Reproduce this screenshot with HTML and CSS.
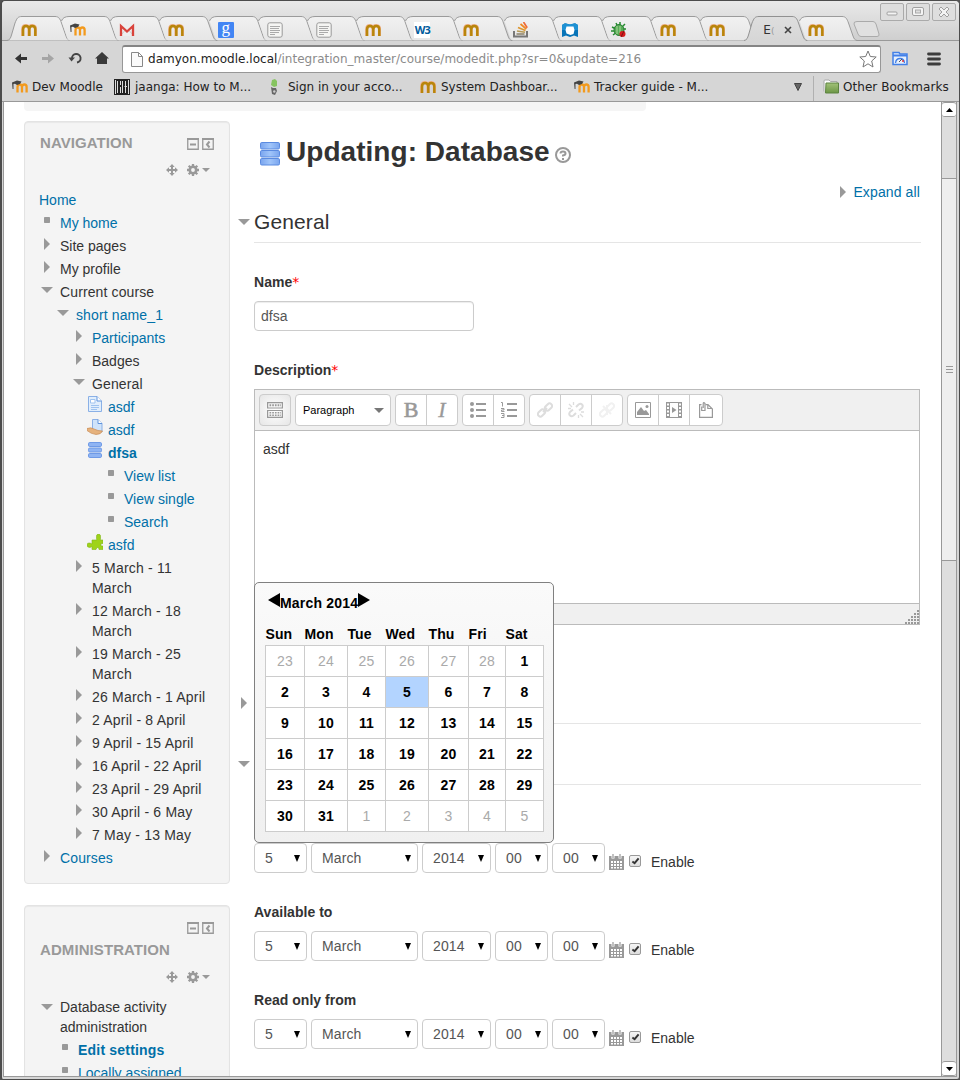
FILE: index.html
```
<!DOCTYPE html>
<html lang="en">
<head>
<meta charset="utf-8">
<title>Editing Database</title>
<link rel="stylesheet" href="styles.css">
</head>
<body>
<svg class="sprite" aria-hidden="true">
  <defs>
    <linearGradient id="tabfill" x1="0" y1="0" x2="0" y2="1"><stop offset="0" stop-color="#f1f1f1"/><stop offset="1" stop-color="#e6e6e6"/></linearGradient>
    <linearGradient id="actfill" x1="0" y1="0" x2="0" y2="1"><stop offset="0" stop-color="#dedede"/><stop offset="1" stop-color="#d6d6d6"/></linearGradient>
    <linearGradient id="dbfill" x1="0" y1="0" x2="1" y2="0"><stop offset="0" stop-color="#7aa5ee"/><stop offset=".5" stop-color="#a0c5fa"/><stop offset="1" stop-color="#7aa5ee"/></linearGradient>
    <linearGradient id="folder" x1="0" y1="0" x2="0" y2="1"><stop offset="0" stop-color="#a3c279"/><stop offset="1" stop-color="#6c9645"/></linearGradient>
  </defs>
  <symbol id="tab-first" viewBox="0 0 64 25"><path d="M0 24.500C3 24 3.500 22 4.500 19L8 7C10 2 11 .5 15 .5H48C52 .5 53 3 54.500 7L59 20C60 23 61 24 63 24.500" fill="url(#tabfill)" stroke="#9b9b9b"/></symbol>
  <symbol id="tab-next" viewBox="0 0 64 25"><path d="M10.500 20L5.500 5C6.500 2 9 .5 13 .5H48C52 .5 53 3 54.500 7L59 20C60 23 61 24 63 24.500H14C12 24 11.500 23 10.500 20Z" fill="url(#tabfill)"/><path d="M5.500 5C6.500 2 9 .5 13 .5H48C52 .5 53 3 54.500 7L59 20C60 23 61 24 63 24.500" fill="none" stroke="#9b9b9b"/></symbol>
  <symbol id="tab-active" viewBox="0 0 64 25"><path d="M0 24.500C3 24 3.500 22 4.500 19L8 7C10 2 11 .5 15 .5H48C52 .5 53 3 54.500 7L59 20C60 23 61 24 63 24.500V25H0Z" fill="url(#actfill)"/><path d="M0 24.500C3 24 3.500 22 4.500 19L8 7C10 2 11 .5 15 .5H48C52 .5 53 3 54.500 7L59 20C60 23 61 24 63 24.500" fill="none" stroke="#919191"/></symbol>
  <symbol id="m" viewBox="0 0 16 16"><path d="M1.700 14V7.500Q1.700 3.700 5 3.700T8 7.500V14M8 7.500Q8 3.700 11.300 3.700T14.500 7.500V14" fill="none" stroke="#f0b08c" stroke-width="3.200"/><path d="M2 14V7.500Q2 4 5 4T8.300 7.500V14M8.300 7.500Q8.300 4 11.300 4T14.300 7.500V14" fill="none" stroke="#b8860b" stroke-width="2.500"/></symbol>
  <symbol id="capm" viewBox="0 0 16 16"><path d="M5.500 13.500V8Q5.700 5.500 7.800 5.500T10 8V13.500M10 8Q10.200 5.500 12.400 5.500T14.600 8V13.500" fill="none" stroke="#f39a1d" stroke-width="2.300"/><path d="M0 3.500L5 1.500L9.500 2.500L8 5L5 6L3 4.800L1.500 5V10H.6Z" fill="#444"/></symbol>
  <symbol id="gmail" viewBox="0 0 16 16"><path d="M1 3H15V14H1Z" fill="#eee"/><path d="M1 14L6 8.500M15 14L10 8.500" stroke="#ccc"/><path d="M2 14V4L8 9.500L14 4V14" fill="none" stroke="#d9433b" stroke-width="2.300"/></symbol>
  <symbol id="doc" viewBox="0 0 16 16"><rect x=".8" y=".8" width="14.400" height="14.400" rx="2" fill="#f5f5f3" stroke="#999"/><path d="M3 4.500H13M3 6.500H12M3 8.500H13M3 10.500H12M3 12.500H8" stroke="#aaa"/></symbol>
  <symbol id="stack" viewBox="0 0 16 16"><path d="M1 9V14.500H14V9" fill="none" stroke="#777" stroke-width="2"/><path d="M3.500 12H11.500" stroke="#8b8068" stroke-width="1.500"/><path d="M4 9L12 10.300" stroke="#b79a55" stroke-width="1.600"/><path d="M5 5.500L12.500 8.500" stroke="#dc962e" stroke-width="1.700"/><path d="M7.500 2L13.300 7" stroke="#f08a22" stroke-width="1.700"/><path d="M10.500 0L14.200 5.800" stroke="#ee6a37" stroke-width="1.700"/></symbol>
  <symbol id="blue" viewBox="0 0 16 16"><path d="M0 3L3 1.200L8 2.500L13 1.200L16 3V15L12 13.500L8 15L4 13.500L0 15Z" fill="#0874b8"/><path d="M0 3L3 1.200L8 2.500L13 1.200L16 3V8H0Z" fill="#1e91d3"/><path d="M4.500 4.500H11.500L12.500 8L11.500 12L8.500 13L4.500 11.500L3.500 8Z" fill="#fff"/></symbol>
  <symbol id="bug" viewBox="0 0 16 16"><path d="M1 5L5 7M0 9H5M5 1L7 5M9 0V5M14 2L10 6M15 7H10M2 13L6 10" stroke="#268c31" stroke-width="1.500"/><ellipse cx="8" cy="8" rx="5" ry="5.500" fill="#55ae55" stroke="#2b7f35"/><path d="M6 4V12M9 4V11" stroke="#b2d4a0"/><circle cx="11.500" cy="12" r="3" fill="#d51c1c"/><path d="M10 15L13 9" stroke="#7b1111"/></symbol>
  <symbol id="qr" viewBox="0 0 16 16"><path d="M0 0H16V16H0Z" fill="#222"/><path d="M1.500 1V15M3.500 2V14M6.500 2V6M6.500 8V14M8.500 2V14M11.500 2V14M14.500 1V15" stroke="#ddd"/><path d="M10.500 7.500H13" stroke="#ddd"/></symbol>
  <symbol id="leaf" viewBox="0 0 8 16"><path d="M2 1L5 0L7 2V7L4 8L1 6Z" fill="#86c460"/><path d="M1 8L3 9L6 9L7 12L5 16L2 15Z" fill="#666"/><circle cx="4.300" cy="12.500" r="1.200" fill="#ccc"/></symbol>
  <symbol id="minus" viewBox="0 0 12 12"><path d="M.75 1H11.250V11.250H.75Z" fill="none" stroke="#999" stroke-width="1.300"/><path d="M0 1H12" stroke="#999" stroke-width="2"/><path d="M3 6.500H9" stroke="#999" stroke-width="2"/></symbol>
  <symbol id="dock" viewBox="0 0 12 12"><path d="M.75 1H11.250V11.250H.75Z" fill="none" stroke="#999" stroke-width="1.300"/><path d="M0 1H12" stroke="#999" stroke-width="2"/><path d="M7.500 3.500L5 6.500L7.500 9.500" fill="none" stroke="#999" stroke-width="2"/></symbol>
  <symbol id="move" viewBox="0 0 12 12"><path d="M6 2V10M2 6H10" stroke="#999" stroke-width="2"/><path d="M6 0L8.700 3H3.300ZM6 12L8.700 9H3.300ZM0 6L3 3.300V8.700ZM12 6L9 3.300V8.700Z" fill="#999"/></symbol>
  <symbol id="gear" viewBox="0 0 12 12"><circle cx="6" cy="6" r="3.200" fill="none" stroke="#999" stroke-width="2.600"/><path d="M6 0V2.500M6 9.500V12M0 6H2.500M9.500 6H12M1.700 1.700L3.500 3.500M8.500 8.500L10.300 10.300M10.300 1.700L8.500 3.500M3.500 8.500L1.700 10.300" stroke="#999" stroke-width="2.300"/></symbol>
  <symbol id="right" viewBox="0 0 16 16"><path d="M5 2L11 8L5 14Z" fill="#999"/></symbol>
  <symbol id="down" viewBox="0 0 16 16"><path d="M2 5H14L8 11Z" fill="#999"/></symbol>
  <symbol id="dot" viewBox="0 0 16 16"><rect x="5" y="5" width="6" height="6" rx=".7" fill="#999"/></symbol>
  <symbol id="page" viewBox="0 0 16 16"><path d="M1.500 .5H10L14.500 5V15.500H1.500Z" fill="#e1eefc" stroke="#8ab0e6"/><path d="M10 .5V5H14.500" fill="#fff" stroke="#5f93dc"/><path d="M4 9.500H12M4 11.500H12M4 13.500H10" stroke="#9fc3ef"/><path d="M3.500 3.500H8V7H3.500Z" fill="#fff" stroke="#9fc3ef"/></symbol>
  <symbol id="hand" viewBox="0 0 16 16"><path d="M5.500 .5H11L15 4.500V13H5.500Z" fill="#cfe3fa" stroke="#8ab0e6"/><path d="M11 .5V4.500H15" fill="#fff" stroke="#5f93dc"/><path d="M0 9.500Q4 8 7 10L11 11.500L15.500 12Q14 15.500 9 15.500Q4 15 0 11.500Z" fill="#e6b27d" stroke="#c98d58" stroke-width=".7"/></symbol>
  <symbol id="db" viewBox="0 0 20 24"><g fill="url(#dbfill)" stroke="#5b8be0"><rect x=".5" y=".5" width="19" height="6.500" rx="1.300"/><rect x=".5" y="8.500" width="19" height="6.500" rx="1.300"/><rect x=".5" y="16.500" width="19" height="6.500" rx="1.300"/></g></symbol>
  <symbol id="dbsmall" viewBox="0 0 16 16"><g fill="#8fb4f3" stroke="#6f9ae6"><rect x="1.500" y=".5" width="13" height="4" rx="1.300"/><rect x="1.500" y="6" width="13" height="4" rx="1.300"/><rect x="1.500" y="11.500" width="13" height="4" rx="1.300"/></g></symbol>
  <symbol id="puzzle" viewBox="0 0 16 16"><path d="M5 15.500V12.500L3 13.500Q0 13.500 0 11T3 9L5 10V6H9.800L9.500 4Q9 0 11.500 0T13.500 4L13.300 6H16V9.500H14V12H16V15.500H12L11.500 13.500H10L9 15.500Z" fill="#9fd319" stroke="#82b51b" stroke-width=".6"/></symbol>
  <symbol id="cal" viewBox="0 0 15 16"><path d="M0 2H15V16H0Z" fill="#999"/><path d="M2 7H4V9H2ZM5 7H7V9H5ZM8 7H10V9H8ZM11 7H13V9H11ZM2 10H4V12H2ZM5 10H7V12H5ZM8 10H10V12H8ZM11 10H13V12H11ZM2 13H4V14.500H2ZM5 13H7V14.500H5ZM8 13H10V14.500H8ZM11 13H13V14.500H11Z" fill="#fff"/><path d="M4 0V4.500M11 0V4.500" stroke="#fff" stroke-width="3"/><path d="M4 0V4M11 0V4" stroke="#999" stroke-width="1.200"/></symbol>
  <symbol id="link" viewBox="0 0 16 16"><g fill="none" stroke-width="2"><rect x="7.500" y="2.500" width="8" height="5" rx="2.500" transform="rotate(-45 11.500 5)"/><rect x=".5" y="8.500" width="8" height="5" rx="2.500" transform="rotate(-45 4.500 11)"/><path d="M6 10L10 6"/></g></symbol>
  <symbol id="unlink" viewBox="0 0 16 16"><g fill="none" stroke-width="2"><path d="M8 5L10.500 2.500Q12.500 1 14 2.500T14 6L11 8.500M8 11L5.500 13.500Q3.500 15 2 13.500T2 10L5 7.500"/><path d="M1 2L4 5M5.500 0V3M0 6.500H3M12 12L15 15M10.500 13V16M13 10H16" stroke-width="1.300"/></g></symbol>
  <symbol id="nolink" viewBox="0 0 16 16"><g fill="none" stroke-width="2"><rect x="7.500" y="2.500" width="8" height="5" rx="2.500" transform="rotate(-45 11.500 5)"/><rect x=".5" y="8.500" width="8" height="5" rx="2.500" transform="rotate(-45 4.500 11)"/><path d="M4 4L12 12M8 3V13"/></g></symbol>
</svg>

<div class="window">
  <header class="titlebar">
    <div class="tabs">
      <div class="tab"><svg class="shape"><use href="#tab-first"/></svg><svg class="fav"><use href="#m"/></svg></div>
      <div class="tab"><svg class="shape"><use href="#tab-next"/></svg><svg class="fav"><use href="#capm"/></svg></div>
      <div class="tab"><svg class="shape"><use href="#tab-next"/></svg><svg class="fav"><use href="#gmail"/></svg></div>
      <div class="tab"><svg class="shape"><use href="#tab-next"/></svg><svg class="fav"><use href="#m"/></svg></div>
      <div class="tab"><svg class="shape"><use href="#tab-next"/></svg><span class="fav fav-g">g</span></div>
      <div class="tab"><svg class="shape"><use href="#tab-next"/></svg><svg class="fav"><use href="#doc"/></svg></div>
      <div class="tab"><svg class="shape"><use href="#tab-next"/></svg><svg class="fav"><use href="#doc"/></svg></div>
      <div class="tab"><svg class="shape"><use href="#tab-next"/></svg><svg class="fav"><use href="#m"/></svg></div>
      <div class="tab"><svg class="shape"><use href="#tab-next"/></svg><span class="fav fav-w">W3</span></div>
      <div class="tab"><svg class="shape"><use href="#tab-next"/></svg><svg class="fav"><use href="#m"/></svg></div>
      <div class="tab"><svg class="shape"><use href="#tab-next"/></svg><svg class="fav"><use href="#stack"/></svg></div>
      <div class="tab"><svg class="shape"><use href="#tab-next"/></svg><svg class="fav"><use href="#blue"/></svg></div>
      <div class="tab"><svg class="shape"><use href="#tab-next"/></svg><svg class="fav"><use href="#bug"/></svg></div>
      <div class="tab"><svg class="shape"><use href="#tab-next"/></svg><svg class="fav"><use href="#m"/></svg></div>
      <div class="tab"><svg class="shape"><use href="#tab-next"/></svg><svg class="fav"><use href="#m"/></svg></div>
      <div class="tab active"><svg class="shape"><use href="#tab-active"/></svg><span class="tab-title">E<span class="faded">(</span></span><svg class="tab-close" viewBox="0 0 8 8"><path d="M1 1L7 7M7 1L1 7" stroke="#444" stroke-width="1.600"/></svg></div>
      <div class="tab"><svg class="shape"><use href="#tab-next"/></svg><svg class="fav"><use href="#m"/></svg></div>
    </div>
    <svg class="newtab" viewBox="0 0 27 17"><path d="M4 .5H20Q22 .5 23 3L26 13Q26.500 15.500 24 15.500H8Q6 15.500 5 13L1 3Q.5 .5 4 .5Z" fill="#e0e0e0" stroke="#aaa"/></svg>
    <div class="winbtns">
      <svg viewBox="0 0 24 18"><rect x=".5" y=".5" width="23" height="17" rx="1.500"/><rect class="glyph" x="7" y="9" width="10" height="3" rx="1"/></svg>
      <svg viewBox="0 0 24 18"><rect x=".5" y=".5" width="23" height="17" rx="1.500"/><rect class="glyph" x="6.500" y="4.500" width="11" height="8" rx="1.500"/><rect x="9.500" y="7" width="5" height="3"/></svg>
      <svg viewBox="0 0 24 18"><rect x=".5" y=".5" width="23" height="17" rx="1.500"/><path class="glyph" d="M7 6L9 4L12 7L15 4L17 6L14 9L17 12L15 14L12 11L9 14L7 12L10 9Z"/></svg>
    </div>
  </header>

  <div class="toolbar">
    <svg class="tool" viewBox="0 0 14 14"><path d="M1 6.500L7 1.500V5H13V8H7V11.500Z" fill="#333"/></svg>
    <svg class="tool" viewBox="0 0 14 14"><path d="M13 6.500L7 1.500V5H1V8H7V11.500Z" fill="#a5a5a5"/></svg>
    <svg class="tool" viewBox="0 0 14 14"><path d="M4 6.500A4.300 4.300 0 1 1 9 10.500" fill="none" stroke="#444" stroke-width="1.900"/><path d="M.5 5.500H7L3.500 9.500Z" fill="#444"/></svg>
    <svg class="tool" viewBox="0 0 14 14"><path d="M7 0L14 6.500H12V12H2V6.500H0Z" fill="#3a3a3a"/></svg>
    <div class="omnibox">
      <svg class="pageicon" viewBox="0 0 12 15"><path d="M.5 .5H7.500L11.500 4.500V14.500H.5ZM7.500 .5V4.500H11.500" fill="#fafafa" stroke="#888"/></svg>
      <span class="url"><span class="host">damyon.moodle.local</span>/integration_master/course/modedit.php?sr=0&amp;update=216</span>
      <svg class="star" viewBox="0 0 18 18"><path d="M9 1L11.300 6.500L17.200 7L12.700 11L14 17L9 13.800L4 17L5.300 11L.8 7L6.700 6.500Z" fill="#fff" stroke="#777"/></svg>
    </div>
    <svg class="ext" viewBox="0 0 16 15"><path d="M1 1.500H7L8 3H15V13.500H1Z" fill="#e7f0fc" stroke="#4280e8" stroke-width="1.500"/><path d="M1 4.500H15" stroke="#4280e8" stroke-width="2"/><path d="M3.500 12Q4 7.500 8 7.500T12.500 12" fill="none" stroke="#4280e8" stroke-width="1.300"/><path d="M7 11L10 8" stroke="#555"/><circle cx="11" cy="10" r="1" fill="#e33"/></svg>
    <svg class="menu" viewBox="0 0 14 14"><path d="M1.500 2H12.500M1.500 7H12.500M1.500 12H12.500" stroke="#3c3c3c" stroke-width="2.800" stroke-linecap="round"/></svg>
  </div>

  <div class="bookmarks">
    <div class="bm bm1"><svg><use href="#capm"/></svg><span>Dev Moodle</span></div>
    <div class="bm bm2"><svg><use href="#qr"/></svg><span>jaanga: How to M...</span></div>
    <div class="bm bm3"><svg><use href="#leaf"/></svg><span>Sign in your acco...</span></div>
    <div class="bm bm4"><svg><use href="#m"/></svg><span>System Dashboar...</span></div>
    <div class="bm bm5"><svg><use href="#capm"/></svg><span>Tracker guide - M...</span></div>
    <svg class="more" viewBox="0 0 8 8"><path d="M.5 .5H7.500L4 7.500Z" fill="#666" stroke="#444"/></svg>
    <div class="bm other"><svg viewBox="0 0 16 15"><path d="M1 12V1.500Q1 .5 2 .5H6L7.500 2H14V5" fill="#fff" stroke="#aaa"/><path d="M3 3.500H15.500V13.500H2.500Z" fill="url(#folder)" stroke="#5c8440"/></svg><span>Other Bookmarks</span></div>
  </div>

  <div class="viewport">
    <div class="page">
      <div class="crumb"></div>
      <aside class="sidebar">
        <section class="block">
          <div class="block-head"><h2>NAVIGATION</h2><svg><use href="#minus"/></svg><svg><use href="#dock"/></svg></div>
          <div class="block-tools"><svg class="mv"><use href="#move"/></svg><svg><use href="#gear"/></svg><i class="caret"></i></div>
          <ul class="tree">
            <li class="root"><a>Home</a></li>
            <li class="l1"><svg><use href="#dot"/></svg><a>My home</a></li>
            <li class="l1"><svg class="tri"><use href="#right"/></svg><span>Site pages</span></li>
            <li class="l1"><svg class="tri"><use href="#right"/></svg><span>My profile</span></li>
            <li class="l1"><svg class="tri"><use href="#down"/></svg><span class="wide">Current course</span></li>
            <li class="l2"><svg class="tri"><use href="#down"/></svg><a class="wide">short name_1</a></li>
            <li class="l3"><svg class="tri"><use href="#right"/></svg><a>Participants</a></li>
            <li class="l3"><svg class="tri"><use href="#right"/></svg><span>Badges</span></li>
            <li class="l3"><svg class="tri"><use href="#down"/></svg><span class="wide">General</span></li>
            <li class="l4"><svg><use href="#page"/></svg><a>asdf</a></li>
            <li class="l4"><svg><use href="#hand"/></svg><a>asdf</a></li>
            <li class="l4"><svg><use href="#dbsmall"/></svg><a class="bold">dfsa</a></li>
            <li class="l5"><svg><use href="#dot"/></svg><a>View list</a></li>
            <li class="l5"><svg><use href="#dot"/></svg><a>View single</a></li>
            <li class="l5"><svg><use href="#dot"/></svg><a>Search</a></li>
            <li class="l4"><svg><use href="#puzzle"/></svg><a>asfd</a></li>
            <li class="l3"><svg class="tri"><use href="#right"/></svg><span class="week">5 March - 11<br>March</span></li>
            <li class="l3"><svg class="tri"><use href="#right"/></svg><span class="week">12 March - 18<br>March</span></li>
            <li class="l3"><svg class="tri"><use href="#right"/></svg><span class="week">19 March - 25<br>March</span></li>
            <li class="l3"><svg class="tri"><use href="#right"/></svg><span class="week">26 March - 1 April</span></li>
            <li class="l3"><svg class="tri"><use href="#right"/></svg><span class="week">2 April - 8 April</span></li>
            <li class="l3"><svg class="tri"><use href="#right"/></svg><span class="week">9 April - 15 April</span></li>
            <li class="l3"><svg class="tri"><use href="#right"/></svg><span class="week">16 April - 22 April</span></li>
            <li class="l3"><svg class="tri"><use href="#right"/></svg><span class="week">23 April - 29 April</span></li>
            <li class="l3"><svg class="tri"><use href="#right"/></svg><span class="week">30 April - 6 May</span></li>
            <li class="l3"><svg class="tri"><use href="#right"/></svg><span class="week">7 May - 13 May</span></li>
            <li class="l1"><svg class="tri"><use href="#right"/></svg><a class="wide">Courses</a></li>
          </ul>
        </section>
        <section class="block">
          <div class="block-head only-icons"><svg><use href="#minus"/></svg><svg><use href="#dock"/></svg></div>
          <h2 class="admin-title">ADMINISTRATION</h2>
          <div class="block-tools admin-tools"><svg class="mv"><use href="#move"/></svg><svg><use href="#gear"/></svg><i class="caret"></i></div>
          <ul class="tree">
            <li class="l1"><svg class="low"><use href="#down"/></svg><span>Database activity<br>administration</span></li>
            <li class="l2 admin"><svg><use href="#dot"/></svg><a class="bold week">Edit settings</a></li>
            <li class="l2 admin"><svg><use href="#dot"/></svg><a>Locally assigned</a></li>
          </ul>
        </section>
      </aside>

      <main class="main">
        <h1><svg class="dbicon"><use href="#db"/></svg><span>Updating: Database</span><svg class="help" viewBox="0 0 16 16"><circle cx="8" cy="8" r="7" fill="none" stroke="#999" stroke-width="2"/><path d="M5.500 6.500Q5.500 4.500 8 4.500T10.500 6.500Q10.500 8 8 8.500V9.500M8 11V13" fill="none" stroke="#999" stroke-width="2"/></svg></h1>
        <div class="expand"><svg><use href="#right"/></svg><a class="wide">Expand all</a></div>
        <div class="legend"><svg><use href="#down"/></svg>General</div>
        <label class="field-label name-label">Name<span class="req">*</span></label>
        <div class="input">dfsa</div>
        <label class="field-label desc-label">Description<span class="req">*</span></label>
        <div class="editor">
          <div class="editor-bar">
            <div class="group toggle"><b><svg viewBox="0 0 16 16"><path d="M.6 .6H15.400V6H.6ZM.6 8.500H15.400V15.400H.6Z" fill="none" stroke="#999" stroke-width="1.200"/><path d="M2.500 3.300H14" stroke="#999" stroke-width="2" stroke-dasharray="1.700 1"/><path d="M2.500 10.700H14M2.500 13.300H14" stroke="#999" stroke-width="1.500" stroke-dasharray="1.700 1"/></svg></b></div>
            <div class="group para">Paragraph<i class="caret"></i></div>
            <div class="group"><b class="bi">B</b><b class="bi it">I</b></div>
            <div class="group"><b><svg viewBox="0 0 16 16"><path d="M6 2H16M6 8H16M6 14H16" stroke="#999" stroke-width="2"/><circle cx="2" cy="2" r="2" fill="#999"/><circle cx="2" cy="8" r="2" fill="#999"/><circle cx="2" cy="14" r="2" fill="#999"/></svg></b><b><svg viewBox="0 0 16 16"><path d="M6 2H16M6 8H16M6 14H16" stroke="#999" stroke-width="2"/><path d="M0 .5H1.500V4.500M0 6.500H3V8H.5V9.500H3.500M0 11.500H3V15.500H0M1 13.500H3" fill="none" stroke="#999"/></svg></b></div>
            <div class="group"><b><svg stroke="#ddd"><use href="#link"/></svg></b><b><svg stroke="#ddd"><use href="#unlink"/></svg></b><b><svg stroke="#f1f1f1"><use href="#nolink"/></svg></b></div>
            <div class="group media"><b><svg viewBox="0 0 16 16"><path d="M.5 .5H15.500V15.500H.5Z" fill="none" stroke="#999"/><path d="M2 13V10L6 5L9 9L11 8L14 12V13Z" fill="#999"/><circle cx="12" cy="4.500" r="1.500" fill="#999"/></svg></b><b><svg viewBox="0 0 16 16"><path d="M0 0H4V16H0ZM12 0H16V16H12Z" fill="#999"/><path d="M4 .5H12M4 15.500H12" stroke="#999"/><path d="M2 1.500V15M14 1.500V15" stroke="#fff" stroke-width="2" stroke-dasharray="2 1.500"/><path d="M6 5L10.500 8L6 11Z" fill="#999"/></svg></b><b><svg viewBox="0 0 16 16"><path d="M3.500 2.600H1.600V15.400H14.400V7L10 2.600H7.500M9.800 2.600V6.500H14.400" fill="none" stroke="#999" stroke-width="1.200"/><path d="M3.700 4.500V8.500H7V1.500Q5.300 -.5 5.200 2V6" fill="none" stroke="#999" stroke-width="1.200"/></svg></b></div>
          </div>
          <div class="editor-body">asdf</div>
          <div class="editor-status"><svg viewBox="0 0 14 14"><path d="M0 13H14M3 10H14M6 7H14M9 4H14M12 1H14" stroke="#999" stroke-width="2" stroke-dasharray="2 1"/></svg></div>
        </div>
        <div class="fieldset collapsed"><svg><use href="#right"/></svg></div>
        <div class="fieldset"><svg><use href="#down"/></svg></div>
        <div class="date first">
          <div class="select s">5</div><div class="select m">March</div><div class="select y">2014</div><div class="select s">00</div><div class="select s">00</div><svg class="calicon"><use href="#cal"/></svg><i class="check"><svg viewBox="0 0 9 9"><path d="M1 5L3.500 7L8 1.500" fill="none" stroke="#333" stroke-width="2.200"/></svg></i><span class="enable">Enable</span>
        </div>
        <label class="field-label date-label">Available to</label>
        <div class="date">
          <div class="select s">5</div><div class="select m">March</div><div class="select y">2014</div><div class="select s">00</div><div class="select s">00</div><svg class="calicon"><use href="#cal"/></svg><i class="check"><svg viewBox="0 0 9 9"><path d="M1 5L3.500 7L8 1.500" fill="none" stroke="#333" stroke-width="2.200"/></svg></i><span class="enable">Enable</span>
        </div>
        <label class="field-label date-label">Read only from</label>
        <div class="date">
          <div class="select s">5</div><div class="select m">March</div><div class="select y">2014</div><div class="select s">00</div><div class="select s">00</div><svg class="calicon"><use href="#cal"/></svg><i class="check"><svg viewBox="0 0 9 9"><path d="M1 5L3.500 7L8 1.500" fill="none" stroke="#333" stroke-width="2.200"/></svg></i><span class="enable">Enable</span>
        </div>

        <div class="calendar">
          <div class="cal-head"><svg viewBox="0 0 12 14"><path d="M12 0V14L0 7Z"/></svg><span class="week">March 2014</span><svg viewBox="0 0 12 14"><path d="M0 0V14L12 7Z"/></svg></div>
          <table>
            <colgroup><col class="c39"><col class="c43"><col class="c38"><col class="c43"><col class="c40"><col class="c37"><col class="c38"></colgroup>
            <thead><tr><th>Sun</th><th>Mon</th><th>Tue</th><th>Wed</th><th>Thu</th><th>Fri</th><th>Sat</th></tr></thead>
            <tbody>
              <tr><td class="off">23</td><td class="off">24</td><td class="off">25</td><td class="off">26</td><td class="off">27</td><td class="off">28</td><td>1</td></tr>
              <tr><td>2</td><td>3</td><td>4</td><td class="sel">5</td><td>6</td><td>7</td><td>8</td></tr>
              <tr><td>9</td><td>10</td><td>11</td><td>12</td><td>13</td><td>14</td><td>15</td></tr>
              <tr><td>16</td><td>17</td><td>18</td><td>19</td><td>20</td><td>21</td><td>22</td></tr>
              <tr><td>23</td><td>24</td><td>25</td><td>26</td><td>27</td><td>28</td><td>29</td></tr>
              <tr><td>30</td><td>31</td><td class="off">1</td><td class="off">2</td><td class="off">3</td><td class="off">4</td><td class="off">5</td></tr>
            </tbody>
          </table>
        </div>
      </main>
    </div>
    <div class="scrollbar">
      <div class="sb-btn"><svg viewBox="0 0 7 4"><path d="M0 4L3.500 0L7 4Z"/></svg></div>
      <div class="sb-gap"></div>
      <div class="sb-thumb"><i></i><i></i><i></i></div>
      <div class="sb-rest"></div>
      <div class="sb-btn"><svg viewBox="0 0 7 4"><path d="M0 0L3.500 4L7 0Z"/></svg></div>
    </div>
  </div>
</div>
</body>
</html>
```
FILE: styles.css
```
* { box-sizing: border-box; }
html, body { margin: 0; height: 1080px; overflow: hidden; }
body { font: 14px/20px "Liberation Sans", Arial, sans-serif; color: #333; background: #555; }
svg { display: block; flex: none; }
.sprite { position: absolute; width: 0; height: 0; }
h1, h2, ul { margin: 0; padding: 0; }
a { color: #0070a8; }
.bold { font-weight: bold; }
.wide { letter-spacing: .12px; }
.week { letter-spacing: .2px; }

.window { height: 1080px; display: flex; flex-direction: column; background: #d6d6d6; border: 1px solid #4c4c4c; border-left-width: 2px; border-radius: 5px 5px 3px 3px; }

/* browser frame */
.titlebar { height: 40px; flex: none; display: flex; align-items: flex-end; padding-left: 5px; background: linear-gradient(#e9e9e9, #cfcfcf); border-bottom: 1px solid #999; border-radius: 4px 4px 0 0; }
.tabs { display: flex; align-items: flex-end; margin-bottom: -1px; }
.tab { position: relative; flex: none; display: flex; width: 64px; height: 25px; margin-right: -14.850px; padding: 6px 0 0 14px; }
.shape { position: absolute; inset: 0; width: 64px; height: 25px; }
.fav { position: relative; width: 16px; height: 16px; }
.fav-g { background: #4285f4; color: #fff; border-radius: 1px; font: 17px/12px "Liberation Serif", serif; text-align: center; }
.fav-w { background: #fff; color: #005a9c; font: bold 11px/16px "Open Sans", sans-serif; letter-spacing: -1px; text-align: center; }
.active { z-index: 1; padding: 5px 0 0 19px; }
.tab-title { position: relative; width: 12px; white-space: nowrap; font: 12px/18px "DejaVu Sans", sans-serif; color: #333; }
.faded { color: #999; font-size: 9px; }
.tab-close { position: relative; width: 8px; height: 8px; margin: 5px 0 0 9px; }
.newtab { width: 27px; height: 17px; margin: 0 0 2px 10px; }
.winbtns { display: flex; gap: 2px; margin-left: auto; align-self: flex-start; padding: 2px 3px 0 0; }
.winbtns svg { width: 24px; height: 18px; fill: #dedede; stroke: #aaa; }
.winbtns .glyph { fill: #f4f4f4; stroke: #a0a0a0; }

.toolbar { height: 35px; flex: none; display: flex; align-items: center; padding-left: 12px; }
.tool { width: 14px; height: 14px; margin-right: 13px; }
.omnibox { width: 759px; height: 28px; display: flex; align-items: center; padding: 0 3px 0 8px; background: #fff; border: 1px solid #979797; border-top: 2px solid #858585; border-radius: 3px; font: 12px/20px "DejaVu Sans", sans-serif; color: #8b8b8b; }
.pageicon { width: 12px; height: 15px; margin-right: 5px; }
.host { color: #222; }
.url { white-space: nowrap; letter-spacing: .02px; }
.star { width: 18px; height: 18px; margin-left: auto; }
.ext { width: 16px; height: 15px; margin-left: 11px; }
.menu { width: 14px; height: 14px; margin-left: 19px; }

.bookmarks { height: 26px; flex: none; display: flex; padding-left: 10px; border-bottom: 1px solid #999; font: 12px/22px "DejaVu Sans", sans-serif; color: #222; white-space: nowrap; }
.bm { display: flex; }
.bm svg { width: 16px; height: 16px; margin: 3px 4px 0 0; }
.bm1 { width: 102px; }
.bm2 { width: 156px; }
.bm2 svg { margin-right: 5px; }
.bm3 { width: 150px; }
.bm3 svg { width: 8px; margin-right: 10px; }
.bm4 { width: 154px; }
.bm4 svg { margin-right: 5px; }
.bm5 { width: 220px; }
.more { width: 8px; height: 8px; margin: 7px 11px 0 0; }
.other { border-left: 1px solid #b0b0b0; padding-left: 9px; letter-spacing: .05px; }

.viewport { flex: none; height: 974px; display: flex; margin: 0 3px 0 2px; overflow: hidden; background: #fff; outline: 1px solid #999; }
.page { width: 937px; height: 974px; flex: none; display: grid; grid-template: 19px 955px / 206px 667px; column-gap: 24px; padding-left: 20px; overflow: hidden; }
.crumb { grid-column: 1 / 3; width: 622px; height: 9px; background: #f5f5f5; border-radius: 0 0 4px 4px; }

/* side blocks */
.sidebar { display: flex; flex-direction: column; gap: 21px; }
.block { flex: none; padding: 12px 15px 15px 14px; background: #f4f4f4; border: 1px solid #e3e3e3; border-radius: 4px; box-shadow: inset 0 1px 1px rgba(0,0,0,.05); }
.block h2 { font-size: 15px; line-height: 20px; color: #999; margin-left: 1px; letter-spacing: .08px; }
.block-head { height: 20px; display: flex; gap: 3px; align-items: center; }
.block-head h2 { margin-top: -2px; margin-right: auto; }
.block-head svg { width: 12px; height: 12px; }
.only-icons { justify-content: flex-end; }
.admin-title { margin-top: 2px; }
.block-tools { height: 20px; margin-top: 6px; display: flex; justify-content: flex-end; align-items: center; padding-right: 4px; }
.admin-tools { margin-top: 7px; }
.block-tools svg { width: 12px; height: 12px; }
.block-tools .mv { margin-right: 9px; }
.block-tools .caret { border-width: 4px 4px 0; margin-left: 3px; }
.caret { width: 0; border: 4px solid transparent; border-top-color: #999; border-bottom: 0; }
.tree { list-style: none; margin-top: 10px; display: flex; flex-direction: column; gap: 3px; white-space: nowrap; }
.tree li { display: flex; align-items: flex-start; }
.tree svg { width: 16px; height: 16px; margin-right: 5px; margin-top: -1px; }
.tree .tri { margin-top: 0; }
.tree .low { margin-top: 2px; }
.l2 { padding-left: 16px; }
.l3 { padding-left: 32px; }
.l4 { padding-left: 48px; }
.l5 { padding-left: 64px; }
.l2.admin { padding-left: 18px; }

/* form */
.main { position: relative; display: flex; flex-direction: column; align-items: stretch; }
h1 { height: 61px; display: flex; align-items: center; padding: 1px 0 0 6px; font-size: 28px; line-height: 40px; letter-spacing: .04px; white-space: nowrap; }
.dbicon { width: 20px; height: 24px; margin: 4px 6px 0 0; }
.help { width: 16px; height: 16px; margin: 5px 0 0 5px; }
.expand { height: 20px; display: flex; justify-content: flex-end; align-items: center; padding-right: 1px; }
.expand svg { width: 16px; height: 16px; margin-right: 2px; }
.legend { height: 41px; display: flex; align-items: center; font-size: 21px; letter-spacing: .12px; border-bottom: 1px solid #e5e5e5; }
.legend svg { width: 16px; height: 16px; margin: 0 2px 0 -18px; }
.field-label { font-weight: bold; letter-spacing: .03px; }
.req { color: #f00; font: 14px/16px "DejaVu Sans", sans-serif; }
.name-label { margin-top: 29px; height: 20px; }
.input { width: 220px; height: 30px; margin-top: 9px; padding: 4px 6px; border: 1px solid #ccc; border-radius: 4px; color: #555; box-shadow: inset 0 1px 1px rgba(0,0,0,.075); }
.desc-label { margin-top: 29px; height: 20px; }
.editor { width: 666px; height: 236px; margin-top: 9px; border: 1px solid #bbb; display: flex; flex-direction: column; }
.editor-bar { height: 41px; display: flex; align-items: center; gap: 4px; padding-left: 4px; background: #f0f0f0; border-bottom: 1px solid #bbb; }
.group { height: 32px; display: flex; background: #fff; border: 1px solid #ccc; border-radius: 4px; }
.group b { width: 31px; display: flex; align-items: center; justify-content: center; border-left: 1px solid #ccc; }
.group b:first-child { width: 30px; border-left: 0; }
.media b:last-child { width: 33px; padding-right: 1px; }
.group b svg { width: 16px; height: 16px; }
.group b.bi { width: 30px; font: 22px/30px "Liberation Serif", serif; color: #999; -webkit-text-stroke: .6px #999; }
.group b.it { width: 31px; font-style: italic; -webkit-text-stroke-width: .3px; }
.toggle { background: radial-gradient(#fff, #e6e6e6); }
.para { width: 96px; align-items: center; justify-content: space-between; padding: 0 6px 0 7px; font-size: 11px; color: #000; }
.para .caret { border-width: 5px 5px 0; border-top-color: #777; }
.editor-body { flex: 1; padding: 8px; }
.editor-status { height: 21px; border-top: 1px solid #bbb; background: #f0f0f0; display: flex; justify-content: flex-end; align-items: flex-end; }
.editor-status svg { width: 14px; height: 14px; }
.fieldset { height: 61px; display: flex; align-items: center; border-bottom: 1px solid #e5e5e5; }
.fieldset.collapsed { height: 99px; padding-top: 57px; }
.fieldset svg { width: 16px; height: 16px; margin-left: -18px; margin-top: 19px; }
.fieldset.collapsed svg { margin-top: 0; }
.date { height: 30px; display: flex; gap: 4px; margin-top: 9px; }
.date.first { margin-top: 58px; }
.date-label { margin-top: 29px; }
.select { height: 30px; display: flex; justify-content: space-between; align-items: center; padding: 0 6px 0 10px; border: 1px solid #ccc; border-radius: 4px; color: #555; letter-spacing: .1px; }
.select::after { content: ""; width: 0; border: 3px solid transparent; border-top: 7px solid #000; border-bottom: 0; }
.select.s { width: 53px; }
.select.m { width: 107px; }
.select.y { width: 69px; }
.calicon { width: 15px; height: 16px; margin-top: 11px; }
.check { width: 12px; height: 12px; margin: 12px 0 0 1px; padding: 1px; border: 1px solid #999; border-radius: 2px; background: linear-gradient(#f5f5f5, #ddd); }
.check svg { width: 9px; height: 8px; }
.enable { margin: 9px 0 0 6px; }

/* date picker popup */
.calendar { position: absolute; left: 0; top: 461px; width: 300px; height: 261px; padding: 10px; border: 1px solid #808080; border-radius: 5px; background: linear-gradient(#fafafa, #f0f0f0); color: #000; font-weight: bold; }
.cal-head { height: 20px; display: flex; padding-left: 3px; }
.cal-head svg { width: 12px; height: 14px; }
.calendar table { width: 279px; margin-top: 11px; table-layout: fixed; border-collapse: collapse; }
.calendar th { height: 21px; padding: 0; text-align: left; letter-spacing: .1px; }
.calendar td { height: 31px; padding: 0; text-align: center; background: #fff; border: 1px solid #ccc; letter-spacing: .15px; }
.calendar .off { color: #aaa; font-weight: normal; }
.calendar .sel { background: #b3d4ff; }
.c39 { width: 39px; } .c43 { width: 43px; } .c38 { width: 38px; } .c40 { width: 40px; } .c37 { width: 37px; }

/* scrollbar */
.scrollbar { width: 15px; flex: none; display: flex; flex-direction: column; border-left: 1px solid #999; background: #dedede; }
.sb-btn { height: 15px; flex: none; display: flex; align-items: center; justify-content: center; background: #fff; border: 1px solid #999; border-left: 0; border-right: 0; border-radius: 3px; }
.sb-btn svg { width: 7px; height: 4px; }
.sb-gap { height: 61px; }
.sb-thumb { height: 383px; display: flex; flex-direction: column; gap: 2px; align-items: center; justify-content: center; background: #efefef; border-top: 1px solid #999; border-bottom: 1px solid #999; }
.sb-thumb i { width: 7px; height: 1px; background: #999; }
.sb-rest { flex: 1; }
```
